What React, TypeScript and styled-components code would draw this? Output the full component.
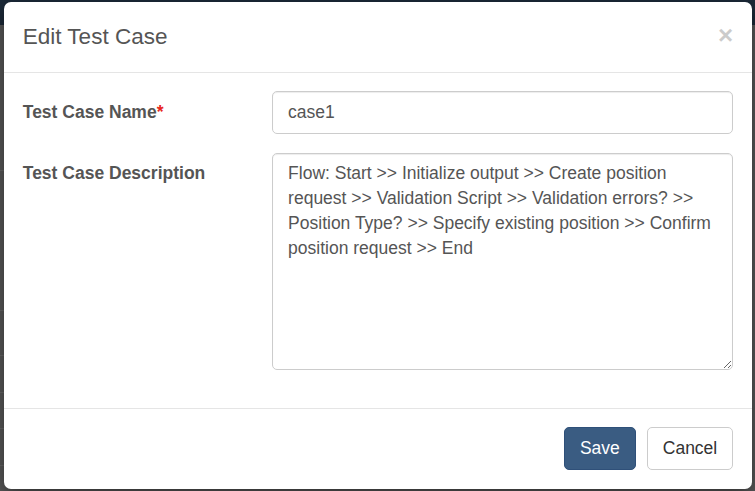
import React from "react";
import styled, { createGlobalStyle } from "styled-components";

const GlobalStyle = createGlobalStyle`
  * { box-sizing: border-box; }
  html, body { margin: 0; padding: 0; height: 100%; }
  body {
    font-family: "Liberation Sans", Arial, Helvetica, sans-serif;
    font-size: 17.5px;
    line-height: 25px;
    color: #333;
    background: #5a5a5a;
    overflow: hidden;
  }
`;

const Screen = styled.div`
  position: relative;
  width: 755px;
  height: 491px;
  background: #5a5a5a;
  overflow: hidden;
`;

const NavStrip = styled.div`
  height: 25px;
  background: #1c2a39;
`;

const PageLine = styled.div<{ $top: number }>`
  position: absolute;
  left: 0;
  top: ${(p) => p.$top}px;
  width: 4px;
  height: 1px;
  background: #6a6a6a;
`;

const Dialog = styled.div`
  position: absolute;
  left: 4px;
  top: 2px;
  width: 748px;
  background: #fff;
  border-radius: 7px;
  box-shadow: 0 6px 19px rgba(0, 0, 0, 0.5);
  overflow: hidden;
`;

const Header = styled.div`
  display: flex;
  align-items: center;
  justify-content: space-between;
  padding: 18.75px;
  border-bottom: 1px solid #e5e5e5;
`;

const Title = styled.h4`
  margin: 0;
  font-size: 22.5px;
  font-weight: normal;
  line-height: 32px;
  color: #555;
`;

const CloseButton = styled.button`
  border: 0;
  background: none;
  padding: 0;
  margin-top: -4px;
  font-family: "Liberation Sans", Arial, sans-serif;
  font-size: 26px;
  font-weight: bold;
  line-height: 1;
  color: #000;
  opacity: 0.2;
  cursor: pointer;
`;

const Body = styled.div`
  padding: 18.75px;
  display: flex;
  flex-direction: column;
  gap: 18.75px;
  padding-bottom: 37.5px;
`;

const FormRow = styled.div`
  display: grid;
  grid-template-columns: 230.6px 1fr;
  column-gap: 18.75px;
`;

const Label = styled.label`
  padding-top: 8.75px;
  font-weight: bold;
  color: #555;
`;

const Required = styled.span`
  color: #e8261c;
  font-weight: bold;
`;

const fieldBase = `
  width: 100%;
  display: block;
  padding: 7.5px 15px;
  font-family: "Liberation Sans", Arial, Helvetica, sans-serif;
  font-size: 17.5px;
  line-height: 25px;
  color: #555;
  background: #fff;
  border: 1px solid #ccc;
  border-radius: 5px;
  box-shadow: inset 0 1px 1px rgba(0, 0, 0, 0.075);
  outline: none;
`;

const TextInput = styled.input`
  ${fieldBase}
  height: 42.5px;
`;

const TextArea = styled.textarea`
  ${fieldBase}
  height: 217.5px;
  resize: vertical;
`;

const Footer = styled.div`
  display: flex;
  justify-content: flex-end;
  gap: 11px;
  padding: 18.75px;
  border-top: 1px solid #e5e5e5;
`;

const Button = styled.button<{ $primary?: boolean }>`
  height: 42.5px;
  padding: 7.5px 15px;
  font-family: "Liberation Sans", Arial, Helvetica, sans-serif;
  font-size: 17.5px;
  line-height: 25px;
  border-radius: 5px;
  border: 1px solid ${(p) => (p.$primary ? "#2f5079" : "#ccc")};
  background: ${(p) => (p.$primary ? "#3a5c82" : "#fff")};
  color: ${(p) => (p.$primary ? "#fff" : "#333")};
  cursor: pointer;
`;

const description =
  "Flow: Start >> Initialize output >> Create position request >> Validation Script >> Validation errors? >> Position Type? >> Specify existing position >> Confirm position request >> End";

export default function App() {
  return (
    <>
      <GlobalStyle />
      <Screen>
        <NavStrip />
        {[170, 310, 355, 392, 428, 465].map((t) => (
          <PageLine key={t} $top={t} />
        ))}
        <Dialog role="dialog">
          <Header>
            <Title>Edit Test Case</Title>
            <CloseButton aria-label="Close">×</CloseButton>
          </Header>
          <Body>
            <FormRow>
              <Label htmlFor="tc-name">
                Test Case Name<Required>*</Required>
              </Label>
              <TextInput id="tc-name" defaultValue="case1" />
            </FormRow>
            <FormRow>
              <Label htmlFor="tc-desc">Test Case Description</Label>
              <TextArea id="tc-desc" rows={8} defaultValue={description} />
            </FormRow>
          </Body>
          <Footer>
            <Button $primary>Save</Button>
            <Button>Cancel</Button>
          </Footer>
        </Dialog>
      </Screen>
    </>
  );
}
